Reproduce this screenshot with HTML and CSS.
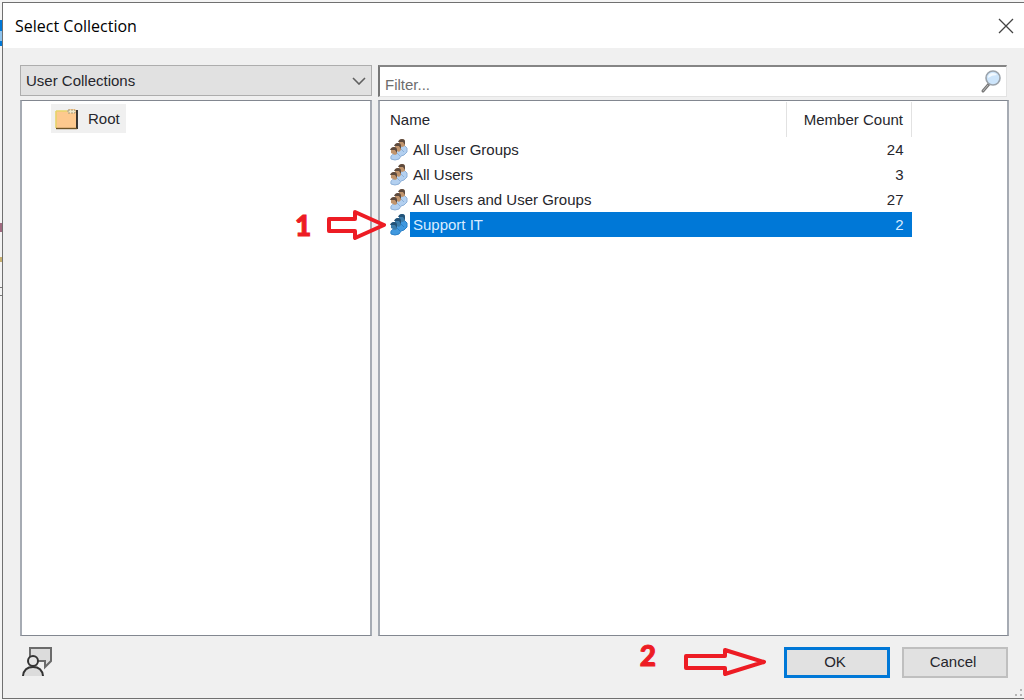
FILE: index.html
```
<!DOCTYPE html>
<html lang="en">
<head>
  <meta charset="UTF-8" />
  <meta name="viewport" content="width=device-width, initial-scale=1.0" />
  <title>Select Collection</title>
  <link rel="stylesheet" href="styles.css">
</head>
<body>
  <svg class="defs" aria-hidden="true">
    <symbol id="people" viewBox="0 0 18 22">
      <path class="shirt" d="M1 20q-1-4 3-5l3-4 4-3 3-2 3 3v4l-3 3-3 1-2 3q-4 2-8 0z" />
      <path class="fold" d="M7 14l3 3M11 10l3 3" />
      <g class="face">
        <path d="M9 2q1-2 3-2 3 0 3 3v4l-3 1-3-2z" />
        <path d="M5 6q1-2 3-2 3 0 3 3v4l-2 2-4-2z" />
        <path d="M1 10q1-2 3-2 3 0 3 3v4l-2 1-4-2z" />
      </g>
      <g class="hair">
        <path d="M8 3q1-3 4-3 3 0 3 3v3l-2-3z" />
        <path d="M4 7q1-3 4-3 3 0 3 3v3l-2-3z" />
        <path d="M0 11q1-3 4-3 3 0 3 3v3l-2-3z" />
      </g>
    </symbol>
  </svg>

  <div class="dialog" role="dialog" aria-labelledby="title">
    <header class="titlebar">
      <h1 id="title">Select Collection</h1>
      <button type="button" class="close" aria-label="Close">
        <svg width="16" height="16" viewBox="0 0 16 16"><path d="M1 1l14 14M15 1L1 15" fill="none" stroke="#444" stroke-width="1.3" /></svg>
      </button>
    </header>

    <main class="content">
      <div class="combo">
        <select aria-label="Collection type">
          <option>User Collections</option>
        </select>
        <svg class="chevron" width="14" height="8" viewBox="0 0 14 8"><path d="M1 1l6 6 6-6" fill="none" stroke="#606060" stroke-width="1.6" /></svg>
      </div>

      <div class="filter">
        <input type="text" placeholder="Filter..." aria-label="Filter" />
        <svg width="22" height="25" viewBox="0 0 22 25">
          <path d="M9 15l-6 7" stroke="#777" stroke-width="3" stroke-linecap="round" />
          <path d="M8 16l-5 6" stroke="#bbb" stroke-width="1" />
          <circle cx="13" cy="9" r="7" fill="#cde5fb" stroke="#9aa2aa" stroke-width="1.6" />
          <path d="M8 9q0-5 5-5 3 0 4 2-5 0-9 3z" fill="#f2f9ff" />
        </svg>
      </div>

      <div class="panel tree">
        <button type="button" class="node">
          <svg width="23" height="22" viewBox="0 0 23 22">
            <path d="M1 3h11l2-2h6l2 2v18H1z" fill="#fdc98e" />
            <path d="M1 3h11M1 3v17" stroke="#e6d36a" stroke-width="1.6" />
            <path d="M13 2h7v3h-7z" fill="#f1e7c8" stroke="#a39a78" stroke-width="1" stroke-dasharray="2 1" />
            <path d="M22 2v19" stroke="#222" stroke-width="1.8" />
            <path d="M1 20.500h21" stroke="#6e5426" stroke-width="1.4" />
          </svg>
          Root
        </button>
      </div>

      <div class="panel list">
        <table>
          <colgroup><col class="col-icon" /><col /><col class="col-count" /></colgroup>
          <thead>
            <tr><th colspan="2">Name</th><th class="count">Member Count</th></tr>
          </thead>
          <tbody>
            <tr><td class="icon"><svg><use href="#people" /></svg></td><td>All User Groups</td><td class="count">24</td></tr>
            <tr><td class="icon"><svg><use href="#people" /></svg></td><td>All Users</td><td class="count">3</td></tr>
            <tr><td class="icon"><svg><use href="#people" /></svg></td><td>All Users and User Groups</td><td class="count">27</td></tr>
            <tr class="selected"><td class="icon"><svg><use href="#people" /></svg></td><td>Support IT</td><td class="count">2</td></tr>
          </tbody>
        </table>
      </div>
    </main>

    <footer class="footer">
      <button type="button" class="feedback" aria-label="Feedback">
        <svg width="32" height="32" viewBox="0 0 32 32" stroke-width="2">
          <path d="M8 12V2h21v13l-6 6v-6h-7" fill="#dcdcdc" stroke="#6b6b6b" />
          <path d="M1 30q1-9 10-9t10 9" fill="#dcdcdc" stroke="#333" />
          <circle cx="11" cy="15" r="5" fill="#e4e4e4" stroke="#333" />
        </svg>
      </button>
      <div class="step">
        <span>2</span>
        <svg width="82" height="28" viewBox="0 0 82 28"><path d="M2 8h39V2l39 12-39 12v-6H2z" /></svg>
      </div>
      <button type="button" class="btn primary">OK</button>
      <button type="button" class="btn">Cancel</button>
      <svg class="grip" width="8" height="8" viewBox="0 0 8 8" fill="#b5b5b5"><path d="M5 0h2v2H5zM5 5h2v2H5zM0 5h2v2H0z" /></svg>
    </footer>
  </div>

  <div class="step step-one">
    <span>1</span>
    <svg width="60" height="30" viewBox="0 0 60 30"><path d="M3 9h26V2l29 13-29 13v-7H3z" /></svg>
  </div>
</body>
</html>
```

FILE: styles.css
```
* { box-sizing: border-box; }
body {
  margin: 0;
  padding: 2px 0 1px 2px;
  min-height: 100vh;
  display: flex;
  position: relative;
  font: 15px/20px "Liberation Sans", Arial, sans-serif;
  color: #26262c;
  background: linear-gradient(#f4f4f4 20px, #0078d7 20px 31px, #8fc4ee 31px 41px, #0078d7 41px 46px, #f4f4f4 46px 223px, #a06a80 223px 232px, #f4f4f4 232px 257px, #c8b070 257px 262px, #f4f4f4 262px 287px, #777 287px 288px, #f4f4f4 288px 295px, #777 295px 296px, #f4f4f4 296px);
}
button, input, select { font: inherit; color: inherit; }
.defs { position: absolute; width: 0; height: 0; }
.shirt { fill: var(--shirt); stroke: var(--shirt-edge); stroke-width: 1; }
.fold { fill: none; stroke: var(--shirt-edge); }
.face { fill: var(--face); }
.hair { fill: var(--hair); }

.dialog { flex: 1; min-width: 0; display: flex; flex-direction: column; border: 1px solid #707070; border-right: 0; background: #f0f0f0; }
.titlebar { display: flex; align-items: center; justify-content: space-between; height: 45px; padding: 0 10px 0 12px; background: #fff; }
.titlebar h1 { margin: 0; font: 16px/20px "Open Sans", "Noto Sans", sans-serif; color: #000; }
.close, .feedback { display: flex; padding: 0; border: 0; background: none; }

.content { flex: 1; display: grid; grid-template-columns: minmax(0, 352fr) minmax(0, 631fr); grid-template-rows: 32px 1fr; gap: 3px 6px; padding: 17px 15px 0 17px; }
.combo { position: relative; height: 31px; }
.combo select { appearance: none; width: 100%; height: 100%; padding: 0 5px; border: 1px solid #adadad; border-radius: 0; background: #e1e1e1; }
.chevron { position: absolute; right: 6px; top: 12px; pointer-events: none; }
.filter { display: flex; align-items: center; margin-right: 2px; padding-right: 4px; border: 1px solid #e3e3e3; border-top: 2px solid #858585; border-left: 2px solid #777; background: #fff; }
.filter input { flex: 1; min-width: 0; padding: 6px 5px 0; border: 0; outline: 0; background: none; }
.filter input::placeholder { color: #6d6d6d; opacity: 1; }

.panel { border: 2px solid #a6abb3; border-top: 1px solid #828790; border-bottom: 1px solid #828790; background: #fff; }
.tree { padding: 3px 0 0 29px; }
.node { display: flex; align-items: center; gap: 10px; height: 29px; padding: 0 6px 0 4px; border: 0; background: #f0f0f0; }

.list { padding-top: 1px; }
.list table { width: 532px; max-width: 100%; table-layout: fixed; border-collapse: collapse; }
.col-icon { width: 30px; }
.col-count { width: 125px; }
th { height: 35px; padding: 0 10px; font-weight: normal; text-align: left; border-right: 1px solid #e2e2e2; }
td { height: 25px; padding: 0 3px; }
.list .count { padding: 0 8px 0 0; text-align: right; }
.list .icon { padding: 0 0 0 10px; }
.icon svg { display: block; width: 18px; height: 22px; }
tr { --shirt: #b3d0f0; --shirt-edge: #8db0d8; --face: #c0946c; --hair: #5d4a3e; }
.selected { --shirt: #4199df; --shirt-edge: #2a80c8; --face: #3c7dab; --hair: #245378; }
.selected td:not(.icon) { background: #0078d7; color: #d9ecff; }

.footer { position: relative; display: flex; align-items: center; gap: 12px; height: 62px; padding: 0 16px 10px 19px; }
.feedback { margin-right: auto; }
.btn { width: 106px; height: 31px; padding: 0 4px 0 0; border: 2px solid #bfbfbf; background: #e1e1e1; }
.primary { border: 3px solid #0078d7; }
.grip { position: absolute; right: 1px; bottom: 1px; }

.step { display: flex; align-items: center; gap: 28px; margin-right: 6px; font: 900 28px/30px Lato, sans-serif; color: #ed1c24; -webkit-text-stroke: 1px #ed1c24; }
.step span { padding-bottom: 14px; }
.step path { fill: none; stroke: #ed1c24; stroke-width: 4; stroke-linejoin: round; }
/* callout over the list */
.step-one { position: absolute; left: 295px; top: 210px; gap: 15px; margin: 0; }
.step-one span { padding: 0; }
```
